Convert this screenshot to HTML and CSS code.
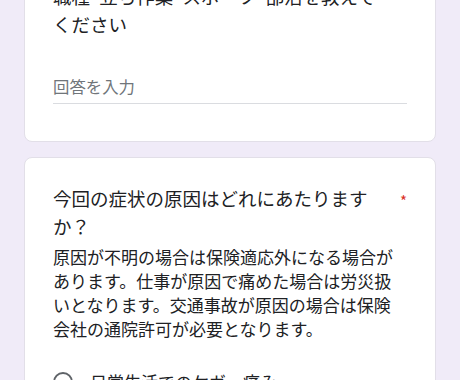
FILE: index.html
```html
<!DOCTYPE html>
<html>
<head>
    <link rel="stylesheet" href="styles.css">
</head>
<body>
    <div class="form">
        <div class="card">
            <div class="question">
                <div class="question-title">職種･立ち作業･スポーツ･部活を教えてください</div>
                <span class="required">*</span>
            </div>
            <div class="answer">回答を入力</div>
        </div>

        <div class="card">
            <div class="question">
                <div class="question-title">今回の症状の原因はどれにあたりますか？</div>
                <span class="required">*</span>
            </div>
            <div class="description">原因が不明の場合は保険適応外になる場合があります。仕事が原因で痛めた場合は労災扱いとなります。交通事故が原因の場合は保険会社の通院許可が必要となります。</div>
            <div class="options">
                <label class="option">
                    <span class="radio"></span>
                    <span class="option-label">日常生活でのケガ・痛み</span>
                </label>
            </div>
        </div>
    </div>
</body>
</html>
```

FILE: styles.css
```css
* {
    margin: 0;
    padding: 0;
    box-sizing: border-box;
}

body {
    font-family: "Noto Sans CJK JP", "Noto Sans", sans-serif;
    background-color: #f0ebf8;
    color: #202124;
    overflow: hidden;
}

.form {
    display: flex;
    flex-direction: column;
    gap: 15px;
    padding: 0 24px;
    margin-top: -42px;
}

.card {
    background: #ffffff;
    border: 1px solid #e2dfe8;
    border-radius: 8px;
    padding: 23px 28px 37px;
}

.card + .card {
    padding-top: 26px;
}

.question {
    display: flex;
    align-items: flex-start;
    justify-content: space-between;
}

.question-title {
    width: 328px;
    font-size: 18.5px;
    line-height: 28px;
}

.required {
    color: #d93025;
    font-size: 15px;
    line-height: 28px;
    padding-top: 3px;
}

.answer {
    margin-top: 36px;
    font-size: 16.4px;
    line-height: 24px;
    color: #70757a;
    padding-bottom: 5px;
    border-bottom: 1px solid #dadce0;
}

.description {
    margin-top: 5px;
    font-size: 17px;
    line-height: 24px;
}

.options {
    margin-top: 29px;
}

.option {
    display: flex;
    align-items: center;
    gap: 17px;
    font-size: 17px;
    line-height: 24px;
}

.radio {
    width: 20px;
    height: 20px;
    border: 2px solid #5f6368;
    border-radius: 50%;
    flex-shrink: 0;
}
```
